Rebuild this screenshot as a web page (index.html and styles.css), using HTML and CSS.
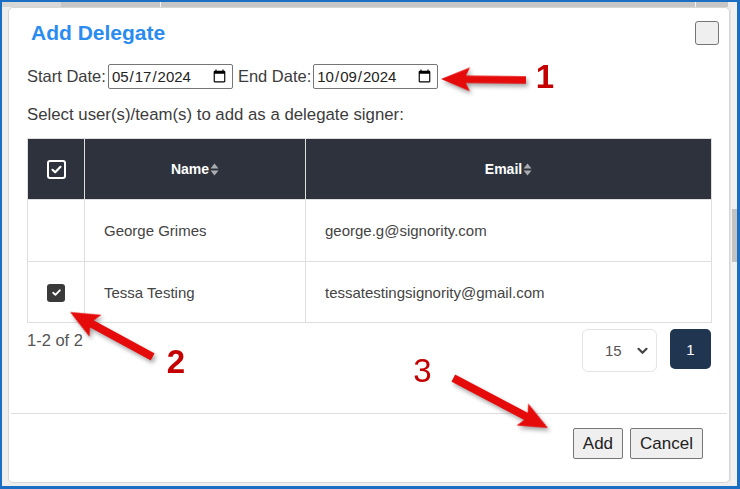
FILE: index.html
```html
<!DOCTYPE html>
<html lang="en">
<head>
<meta charset="utf-8">
<title>Add Delegate</title>
<link rel="stylesheet" href="styles.css">
</head>
<body>
<div class="frame">
  <div class="topstrip"></div>
  <div class="stage">
    <div class="gutter"></div>
    <div class="modal">
      <div class="m-head">
        <h2 class="title">Add Delegate</h2>
        <button class="close" aria-label="Close"></button>
      </div>
      <div class="dates">
        <label class="lbl">Start Date:</label><input class="date" type="date" value="2024-05-17">
        <label class="lbl">End Date:</label><input class="date" type="date" value="2024-10-09">
      </div>
      <p class="hint">Select user(s)/team(s) to add as a delegate signer:</p>
      <table class="grid">
        <colgroup><col class="c1"><col class="c2"><col class="c3"></colgroup>
        <thead>
          <tr>
            <th><span class="hcheck"><svg width="13" height="13" viewBox="0 0 13 13"><path d="M2.5 6.8 L5.2 9.3 L10.5 3.8" fill="none" stroke="#fff" stroke-width="2.2" stroke-linecap="round" stroke-linejoin="round"/></svg></span></th>
            <th><span class="hl">Name<svg class="sort" width="9" height="13" viewBox="0 0 9 13"><path d="M4.5 0.5 L8.5 5.5 H0.5 Z M4.5 12.5 L8.5 7.5 H0.5 Z" fill="#a9abb0"/></svg></span></th>
            <th><span class="hl">Email<svg class="sort" width="9" height="13" viewBox="0 0 9 13"><path d="M4.5 0.5 L8.5 5.5 H0.5 Z M4.5 12.5 L8.5 7.5 H0.5 Z" fill="#a9abb0"/></svg></span></th>
          </tr>
        </thead>
        <tbody>
          <tr class="first">
            <td class="cb"></td>
            <td>George Grimes</td>
            <td>george.g@signority.com</td>
          </tr>
          <tr>
            <td class="cb"><span class="bcheck"><svg width="11" height="11" viewBox="0 0 11 11"><path d="M2.2 5.8 L4.4 7.8 L8.8 3.3" fill="none" stroke="#fff" stroke-width="1.9" stroke-linecap="round" stroke-linejoin="round"/></svg></span></td>
            <td>Tessa Testing</td>
            <td>tessatestingsignority@gmail.com</td>
          </tr>
        </tbody>
      </table>
      <div class="pager">
        <span class="count">1-2 of 2</span>
        <div class="pager-ctl">
          <div class="pagesize"><span>15</span><svg class="chev" width="11" height="8" viewBox="0 0 11 8"><path d="M1.5 1.8 L5.5 5.8 L9.5 1.8" fill="none" stroke="#444" stroke-width="2.2" stroke-linecap="round" stroke-linejoin="round"/></svg></div>
          <button class="page">1</button>
        </div>
      </div>
      <div class="divider"></div>
      <div class="actions">
        <button class="btn">Add</button>
        <button class="btn">Cancel</button>
      </div>
    </div>
    <div class="scroll"><div class="thumb"></div></div>
  </div>
  <svg class="notes" width="740" height="489" viewBox="0 0 740 489">
    <g class="arrows">
      <polygon transform="translate(441 79) rotate(180.7)" points="0,0 -29,-12 -25,-3.8 -85,-3.8 -85,3.8 -25,3.8 -29,12"/>
      <polygon transform="translate(70 312) rotate(208.5)" points="0,0 -29,-12.5 -25,-4 -94,-4 -94,4 -25,4 -29,12.5"/>
      <polygon transform="translate(548 428) rotate(27.8)" points="0,0 -29,-12.5 -25,-4 -107,-4 -107,4 -25,4 -29,12.5"/>
    </g>
    <text class="num bold" x="545" y="88">1</text>
    <text class="num bold" x="176" y="373">2</text>
    <text class="num" x="422.5" y="382">3</text>
  </svg>
</div>
</body>
</html>
```

FILE: styles.css
```css
body {
  margin: 0;
  background: #ffffff;
}

.frame {
  width: 740px;
  height: 489px;
  box-sizing: border-box;
  border-style: solid;
  border-color: #1a6fc4;
  border-width: 2px 3px 3px 2px;
  background: #eeeeee;
  display: flex;
  flex-direction: column;
  position: relative;
  overflow: hidden;
  font-family: "Liberation Sans", Arial, sans-serif;
}

.topstrip {
  height: 5px;
  margin-right: 9px;
  background: linear-gradient(to right,
    #d8d8d8 0 59px,
    #c6c6c6 59px 158px,
    #f4f4f4 158px 159px,
    #c6c6c6 159px 693px,
    #f4f4f4 693px 694px,
    #c6c6c6 694px);
}

.stage {
  display: flex;
  height: 476px;
}

.gutter {
  width: 6px;
}

.modal {
  width: 722px;
  box-sizing: border-box;
  border: 1px solid #d6d6d6;
  border-radius: 5px;
  background: #ffffff;
  padding: 13px 18px 0;
  display: flex;
  flex-direction: column;
}

.scroll {
  width: 7px;
  box-sizing: border-box;
  background: #f1f1f1;
  border-left: 1px solid #e3e3e3;
}

.thumb {
  margin-top: 202px;
  margin-left: 1px;
  width: 5px;
  height: 53px;
  background: #c3c3c3;
}

.m-head {
  display: flex;
  align-items: center;
  justify-content: space-between;
  height: 24px;
}

.title {
  margin: 0 0 0 4px;
  font-size: 21px;
  font-weight: 700;
  color: #2a8cf0;
  line-height: 24px;
}

.close {
  width: 24px;
  height: 24px;
  margin-right: -8px;
  padding: 0;
  background: #efefef;
  border: 1px solid #767676;
  border-radius: 3px;
}

.dates {
  display: flex;
  align-items: center;
  margin-top: 19px;
  height: 25px;
  font-size: 16.5px;
  color: #3c3c3c;
}

.lbl {
  margin-right: 2px;
}

.date {
  width: 125px;
  height: 25px;
  box-sizing: border-box;
  margin: 0 5px 0 0;
  padding: 0 3px 0 2px;
  font-family: "Liberation Sans", Arial, sans-serif;
  font-size: 15px;
  color: #222222;
  background: #ffffff;
  border: 1px solid #767676;
  border-radius: 2px;
}

.hint {
  margin: 16px 0 0;
  line-height: 19px;
  font-size: 16.8px;
  color: #3c3c3c;
}

.grid {
  margin-top: 14px;
  width: 684px;
  border-collapse: collapse;
  table-layout: fixed;
}

.c1 { width: 57px; }
.c2 { width: 221px; }
.c3 { width: 406px; }

.grid th,
.grid td {
  border: 1px solid #dedede;
  padding: 0;
}

.grid thead th {
  background: #2d323d;
  color: #ffffff;
  height: 60px;
  font-size: 14px;
  font-weight: 700;
  text-align: center;
  vertical-align: middle;
}

.hl {
  display: inline-flex;
  align-items: center;
  gap: 1px;
}

.sort {
  display: block;
}

.hcheck {
  display: inline-flex;
  align-items: center;
  justify-content: center;
  width: 19px;
  height: 19px;
  box-sizing: border-box;
  border: 2px solid #ffffff;
  border-radius: 3px;
  vertical-align: middle;
}

.hcheck svg { display: block; }

.grid td {
  height: 60px;
  font-size: 15px;
  color: #444444;
  padding-left: 19px;
  vertical-align: middle;
}

.grid tr.first td {
  height: 61px;
}

.grid td.cb {
  padding-left: 0;
  text-align: center;
}

.bcheck {
  display: inline-flex;
  align-items: center;
  justify-content: center;
  width: 18px;
  height: 18px;
  background: #3a3a3a;
  border-radius: 3px;
  vertical-align: middle;
}

.bcheck svg { display: block; }

.pager {
  display: flex;
  justify-content: space-between;
  align-items: flex-start;
  margin-top: 6px;
}

.count {
  font-size: 16.5px;
  line-height: 19px;
  margin-top: 2px;
  color: #555555;
}

.pager-ctl {
  display: flex;
  align-items: flex-start;
  gap: 13px;
}

.pagesize {
  width: 75px;
  height: 43px;
  box-sizing: border-box;
  border: 1px solid #e4e4e4;
  border-radius: 6px;
  display: flex;
  align-items: center;
  padding-left: 22px;
  font-size: 15px;
  color: #555555;
}

.chev {
  margin-left: 15px;
  display: block;
}

.page {
  width: 41px;
  height: 40px;
  padding: 0;
  border: 0;
  border-radius: 5px;
  background: #203550;
  color: #ffffff;
  font-family: "Liberation Sans", Arial, sans-serif;
  font-size: 15px;
}

.divider {
  margin: 41px -16px 0;
  height: 1px;
  background: #dedede;
}

.actions {
  display: flex;
  justify-content: flex-end;
  gap: 7px;
  margin-top: 14px;
  padding-right: 8px;
}

.btn {
  height: 31px;
  padding: 0 9px;
  font-family: "Liberation Sans", Arial, sans-serif;
  font-size: 17px;
  color: #222222;
  background: #efefef;
  border: 1px solid #767676;
  border-radius: 2px;
}

.notes {
  position: absolute;
  left: -2px;
  top: -2px;
  pointer-events: none;
}

.arrows {
  fill: #e60b0b;
  filter: drop-shadow(2px 3px 2px rgba(0, 0, 0, 0.35));
}

.num {
  font-family: "Liberation Sans", Arial, sans-serif;
  font-size: 33px;
  fill: #c40000;
  text-anchor: middle;
}

.num.bold {
  font-weight: 700;
}
```
